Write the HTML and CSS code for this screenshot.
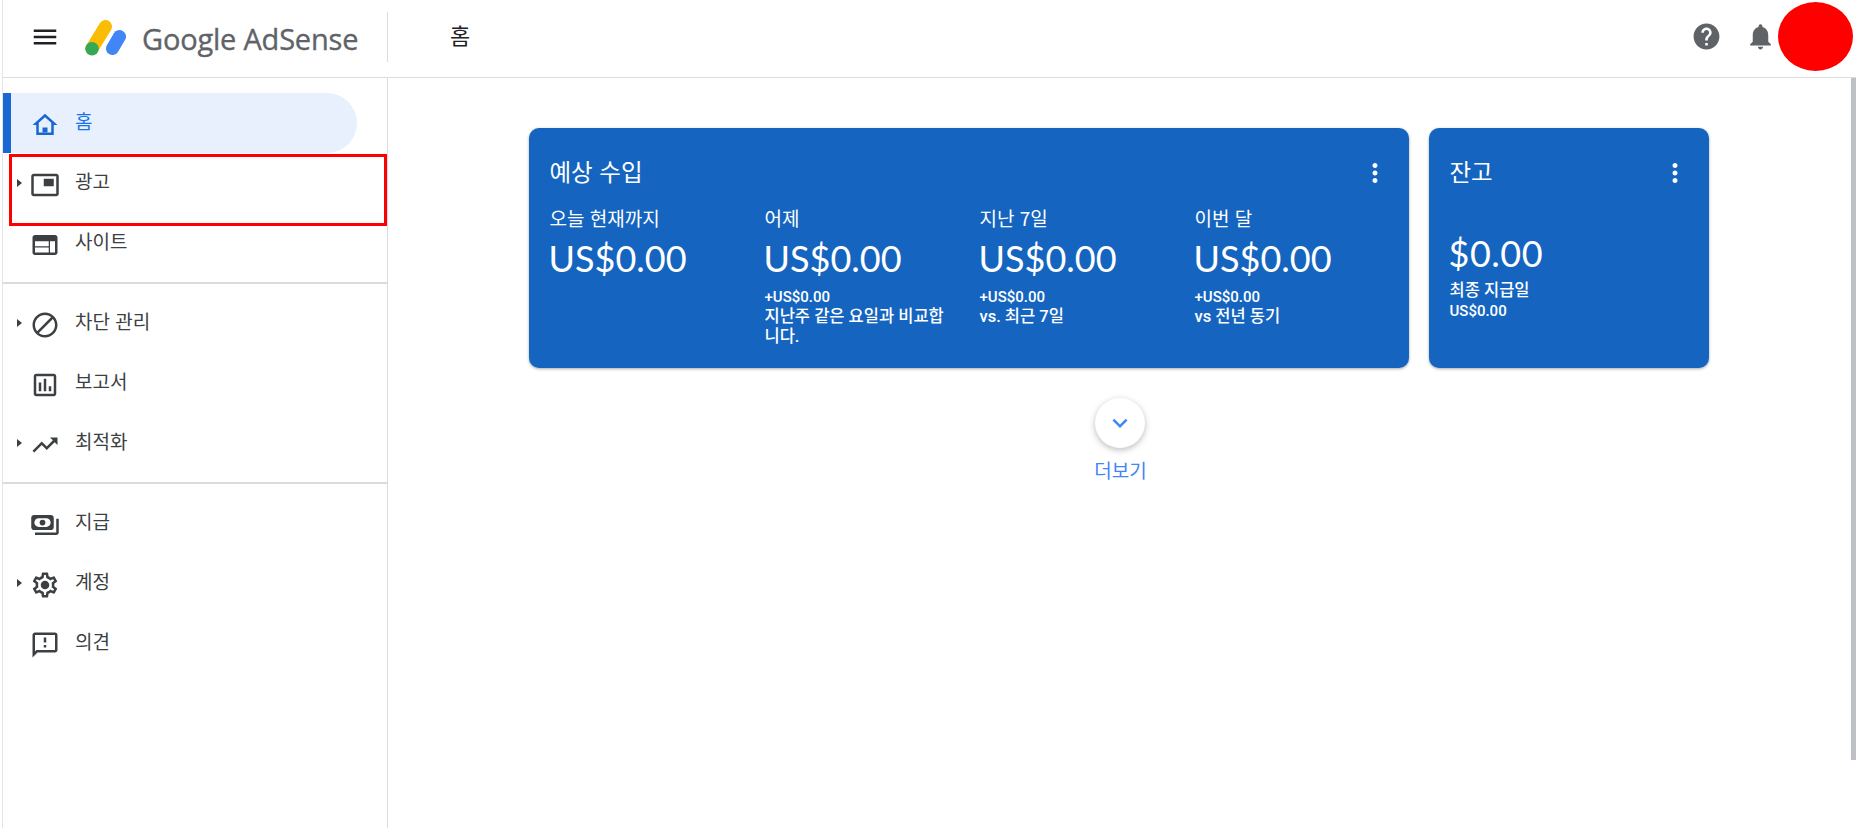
FILE: index.html
```html
<!DOCTYPE html>
<html lang="ko">
<head>
<meta charset="UTF-8">
<meta name="viewport" content="width=device-width, initial-scale=1.0">
<link rel="stylesheet" href="styles.css">
<title>Google AdSense</title>
</head>
<body>
<header class="topbar">
  <div class="brand">
    <svg class="menu-icon" viewBox="0 0 24 24"><path d="M3 18h18v-2H3v2zm0-5h18v-2H3v2zm0-7v2h18V6H3z"/></svg>
    <svg class="logo-mark" viewBox="0 0 41 36">
      <path d="M20.5 6.500L7 28.500" stroke="#fbbc04" stroke-width="13" stroke-linecap="round"/>
      <path d="M34.500 16.500L27.500 28.500" stroke="#4285f4" stroke-width="13" stroke-linecap="round"/>
      <circle cx="7" cy="28.700" r="6.800" fill="#34a853"/>
    </svg>
    <span class="logo-text">Google AdSense</span>
  </div>
  <h1 class="page-title">홈</h1>
  <div class="top-actions">
    <svg class="help-icon" viewBox="0 0 24 24"><path d="M12 2C6.48 2 2 6.48 2 12s4.48 10 10 10 10-4.48 10-10S17.52 2 12 2zm1 17h-2v-2h2v2zm2.07-7.75l-.9.92C13.45 12.9 13 13.5 13 15h-2v-.5c0-1.1.45-2.1 1.17-2.83l1.24-1.26c.37-.36.59-.86.59-1.41 0-1.1-.9-2-2-2s-2 .9-2 2H8c0-2.21 1.79-4 4-4s4 1.79 4 4c0 .88-.36 1.68-.93 2.25z"/></svg>
    <svg class="bell-icon" viewBox="0 0 24 24"><path d="M12 22c1.1 0 2-.9 2-2h-4c0 1.1.89 2 2 2zm6-6v-5c0-3.07-1.64-5.64-4.5-6.32V4c0-.83-.67-1.5-1.5-1.5s-1.5.67-1.5 1.5v.68C7.63 5.36 6 7.92 6 11v5l-2 2v1h16v-1l-2-2z"/></svg>
    <div class="avatar"></div>
  </div>
</header>

<div class="layout">
  <nav class="sidebar">
    <div class="nav-group">
      <a class="nav-item active">
        <span class="arrow-slot"></span>
        <svg class="nav-icon" viewBox="0 0 24 24"><path fill-rule="evenodd" d="M12 3L2 12h3v8h14v-8h3L12 3zm0 2.700l5 4.500V18H7v-7.800l5-4.500z"/><path d="M10 14h4v4h-4z"/></svg>
        <span class="nav-label">홈</span>
      </a>
      <a class="nav-item">
        <span class="arrow-slot"><i class="arrow"></i></span>
        <svg class="nav-icon" viewBox="0 0 24 24"><path d="M19 7h-8v6h8V7zm2-4H3c-1.1 0-2 .9-2 2v14c0 1.1.9 1.9 2 1.9h18c1.1 0 2-.8 2-1.9V5c0-1.1-.9-2-2-2zm0 16.01H3V4.98h18v14.03z"/></svg>
        <span class="nav-label">광고</span>
      </a>
      <a class="nav-item">
        <span class="arrow-slot"></span>
        <svg class="nav-icon" viewBox="0 0 24 24"><path d="M20 4H4c-1.1 0-2 .9-2 2v12c0 1.1.9 2 2 2h16c1.1 0 2-.9 2-2V6c0-1.1-.9-2-2-2zm-5 14H4v-4h11v4zm0-5H4V9h11v4zm5 5h-4V9h4v9z"/></svg>
        <span class="nav-label">사이트</span>
      </a>
    </div>
    <div class="nav-group">
      <a class="nav-item">
        <span class="arrow-slot"><i class="arrow"></i></span>
        <svg class="nav-icon" viewBox="0 0 24 24"><path d="M12 2C6.48 2 2 6.48 2 12s4.48 10 10 10 10-4.48 10-10S17.52 2 12 2zM4 12c0-4.42 3.58-8 8-8 1.85 0 3.55.63 4.9 1.69L5.69 16.9C4.63 15.55 4 13.85 4 12zm8 8c-1.85 0-3.55-.63-4.9-1.69L18.31 7.1C19.37 8.45 20 10.15 20 12c0 4.42-3.58 8-8 8z"/></svg>
        <span class="nav-label">차단 관리</span>
      </a>
      <a class="nav-item">
        <span class="arrow-slot"></span>
        <svg class="nav-icon" viewBox="0 0 24 24"><path d="M19 3H5c-1.1 0-2 .9-2 2v14c0 1.1.9 2 2 2h14c1.1 0 2-.9 2-2V5c0-1.1-.9-2-2-2zm0 16H5V5h14v14zM7 10h2v7H7zm4-3h2v10h-2zm4 6h2v4h-2z"/></svg>
        <span class="nav-label">보고서</span>
      </a>
      <a class="nav-item">
        <span class="arrow-slot"><i class="arrow"></i></span>
        <svg class="nav-icon" viewBox="0 0 24 24"><path d="M16 6l2.29 2.29-4.88 4.88-4-4L2 16.59 3.41 18l6-6 4 4 6.3-6.29L22 12V6z"/></svg>
        <span class="nav-label">최적화</span>
      </a>
    </div>
    <div class="nav-group">
      <a class="nav-item">
        <span class="arrow-slot"></span>
        <svg class="nav-icon" viewBox="0 0 24 24">
          <path d="M23 7v11c0 1.100-.9 2-2 2H4v-2h17V7h2z"/>
          <rect x="1" y="4" width="18" height="12" rx="2.500"/>
          <rect x="3.500" y="6.500" width="13" height="7" rx="3.500" fill="#ffffff"/>
          <circle cx="10" cy="10" r="2.300"/>
        </svg>
        <span class="nav-label">지급</span>
      </a>
      <a class="nav-item">
        <span class="arrow-slot"><i class="arrow"></i></span>
        <svg class="nav-icon" viewBox="0 0 24 24"><path d="M19.43 12.98c.04-.32.07-.64.07-.98s-.03-.66-.07-.98l2.11-1.65c.19-.15.24-.42.12-.64l-2-3.46c-.12-.22-.39-.3-.61-.22l-2.49 1c-.52-.4-1.08-.73-1.69-.98l-.38-2.65C14.46 2.18 14.25 2 14 2h-4c-.25 0-.46.18-.49.42l-.38 2.65c-.61.25-1.17.59-1.69.98l-2.49-1c-.23-.09-.49 0-.61.22l-2 3.46c-.13.22-.07.49.12.64l2.11 1.65c-.04.32-.07.65-.07.98s.03.66.07.98l-2.11 1.65c-.19.15-.24.42-.12.64l2 3.46c.12.22.39.3.61.22l2.49-1c.52.4 1.08.73 1.69.98l.38 2.65c.03.24.24.42.49.42h4c.25 0 .46-.18.49-.42l.38-2.65c.61-.25 1.17-.59 1.69-.98l2.49 1c.23.09.49 0 .61-.22l2-3.46c.12-.22.07-.49-.12-.64l-2.11-1.65zm-1.98-1.71c.04.31.05.52.05.73 0 .21-.02.43-.05.73l-.14 1.13.89.7 1.08.84-.7 1.21-1.27-.51-1.04-.42-.9.68c-.43.32-.84.56-1.25.73l-1.06.43-.16 1.13-.2 1.35h-1.4l-.19-1.35-.16-1.13-1.06-.43c-.43-.18-.83-.41-1.23-.71l-.91-.7-1.06.43-1.27.51-.7-1.21 1.08-.84.89-.7-.14-1.13c-.03-.31-.05-.54-.05-.74s.02-.43.05-.73l.14-1.13-.89-.7-1.08-.84.7-1.21 1.27.51 1.04.42.9-.68c.43-.32.84-.56 1.25-.73l1.06-.43.16-1.13.2-1.35h1.39l.19 1.35.16 1.13 1.06.43c.43.18.83.41 1.23.71l.91.7 1.06-.43 1.27-.51.7 1.21-1.07.85-.89.7.14 1.13z"/><circle cx="12" cy="12" r="3.400"/></svg>
        <span class="nav-label">계정</span>
      </a>
      <a class="nav-item">
        <span class="arrow-slot"></span>
        <svg class="nav-icon" viewBox="0 0 24 24"><path d="M20 2H4c-1.1 0-1.99.9-1.99 2L2 22l4-4h14c1.1 0 2-.9 2-2V4c0-1.1-.9-2-2-2zm0 14H5.17L4 17.17V4h16v12zm-9-4h2v2h-2zm0-6h2v4h-2z"/></svg>
        <span class="nav-label">의견</span>
      </a>
    </div>
    <div class="highlight-box"></div>
  </nav>

  <main class="content">
    <div class="cards">
      <section class="card card-wide">
        <div class="card-head">
          <h2>예상 수입</h2>
          <svg class="more-icon" viewBox="0 0 24 24"><path d="M12 8c1.1 0 2-.9 2-2s-.9-2-2-2-2 .9-2 2 .9 2 2 2zm0 2c-1.1 0-2 .9-2 2s.9 2 2 2 2-.9 2-2-.9-2-2-2zm0 6c-1.1 0-2 .9-2 2s.9 2 2 2 2-.9 2-2-.9-2-2-2z"/></svg>
        </div>
        <div class="stats">
          <div class="stat">
            <div class="stat-label">오늘 현재까지</div>
            <div class="stat-value">US$0.00</div>
          </div>
          <div class="stat">
            <div class="stat-label">어제</div>
            <div class="stat-value">US$0.00</div>
            <p class="note"><span class="note-amount">+US$0.00</span><span class="note-text">지난주 같은 요일과 비교합니다.</span></p>
          </div>
          <div class="stat">
            <div class="stat-label">지난 7일</div>
            <div class="stat-value">US$0.00</div>
            <p class="note"><span class="note-amount">+US$0.00</span><span class="note-text">vs. 최근 7일</span></p>
          </div>
          <div class="stat">
            <div class="stat-label">이번 달</div>
            <div class="stat-value">US$0.00</div>
            <p class="note"><span class="note-amount">+US$0.00</span><span class="note-text">vs 전년 동기</span></p>
          </div>
        </div>
      </section>
      <section class="card card-small">
        <div class="card-head">
          <h2>잔고</h2>
          <svg class="more-icon" viewBox="0 0 24 24"><path d="M12 8c1.1 0 2-.9 2-2s-.9-2-2-2-2 .9-2 2 .9 2 2 2zm0 2c-1.1 0-2 .9-2 2s.9 2 2 2 2-.9 2-2-.9-2-2-2zm0 6c-1.1 0-2 .9-2 2s.9 2 2 2 2-.9 2-2-.9-2-2-2z"/></svg>
        </div>
        <div class="balance-value">$0.00</div>
        <p class="note balance-note"><span class="note-text">최종 지급일</span><span class="note-amount">US$0.00</span></p>
      </section>
    </div>
    <div class="more">
      <button class="more-button">
        <svg viewBox="0 0 24 24"><path d="M7.41 8.59L12 13.17l4.59-4.58L18 10l-6 6-6-6z"/></svg>
      </button>
      <span class="more-label">더보기</span>
    </div>
  </main>
  <div class="scrollbar"></div>
</div>
</body>
</html>
```

FILE: styles.css
```css
* {
  box-sizing: border-box;
}

body {
  margin: 0 0 0 2px;
  height: 100vh;
  overflow: hidden;
  display: flex;
  flex-direction: column;
  background-color: #ffffff;
  border-left: 1px solid #e3e5e8;
  font-family: "Noto Sans CJK KR", "Noto Sans", sans-serif;
  color: #3c4043;
}

/* top bar */
.topbar {
  height: 78px;
  flex-shrink: 0;
  display: flex;
  align-items: center;
  border-bottom: 1px solid #dadce0;
  padding-bottom: 4px;
}

.brand {
  width: 385px;
  height: 50px;
  display: flex;
  align-items: center;
  border-right: 1px solid #dadce0;
  padding-left: 27px;
}

.menu-icon {
  width: 30px;
  height: 30px;
  fill: #202124;
  margin-right: 25px;
}

.logo-mark {
  width: 41px;
  height: 36px;
  margin-right: 16px;
  margin-top: 2px;
}

.logo-text {
  font-family: "Open Sans", sans-serif;
  font-size: 29px;
  color: #5f6368;
  letter-spacing: -0.2px;
  -webkit-text-stroke: 0.35px #5f6368;
  margin-top: 3px;
}

.page-title {
  margin: 0 0 5px 62px;
  font-size: 22px;
  font-weight: 400;
  color: #202124;
}

.top-actions {
  margin-left: auto;
  display: flex;
  align-items: center;
  margin-right: 3px;
}

.help-icon,
.bell-icon {
  width: 31px;
  height: 31px;
  fill: #5f6368;
}

.help-icon {
  margin-right: 23px;
}

.bell-icon {
  margin-right: 2px;
}

.avatar {
  width: 75px;
  height: 69px;
  border-radius: 50%;
  background-color: #ff0000;
}

/* sidebar */
.layout {
  flex: 1;
  display: flex;
  min-height: 0;
}

.sidebar {
  position: relative;
  width: 385px;
  flex-shrink: 0;
  border-right: 1px solid #dadce0;
  padding-top: 15px;
}

.nav-group {
  padding-bottom: 9px;
}

.nav-group + .nav-group {
  border-top: 2px solid #dadce0;
  padding-top: 9px;
}

.nav-item {
  height: 60px;
  width: 354px;
  display: flex;
  align-items: center;
  font-size: 19px;
  color: #3c4043;
}

.nav-item.active {
  background-color: #e8f0fe;
  border-left: 8px solid #1967d2;
  border-radius: 0 30px 30px 0;
  color: #1a73e8;
}

.arrow-slot {
  width: 27px;
  padding-left: 14px;
  display: flex;
}

.active .arrow-slot {
  width: 19px;
  padding-left: 6px;
}

.arrow {
  border-left: 5px solid #3c4043;
  border-top: 4px solid transparent;
  border-bottom: 4px solid transparent;
}

.nav-icon {
  width: 30px;
  height: 30px;
  fill: #3c4043;
  margin-top: 4px;
  margin-right: 15px;
}

.active .nav-icon {
  fill: #1967d2;
}

.nav-label {
  margin-bottom: 6px;
}

/* annotation over the nav */
.highlight-box {
  position: absolute;
  left: 6px;
  top: 76px;
  width: 378px;
  height: 72px;
  border: 3px solid #ff0000;
}

/* main content */
.content {
  flex: 1;
  padding: 50px 2px 0 0;
  display: flex;
  flex-direction: column;
  align-items: center;
}

.cards {
  display: flex;
  gap: 20px;
}

.card {
  height: 240px;
  background-color: #1565c0;
  border-radius: 10px;
  box-shadow: 0 1px 3px rgba(60, 64, 67, 0.45);
  color: #ffffff;
  padding: 28px 19px 0 21px;
}

.card-wide {
  width: 880px;
}

.card-small {
  width: 280px;
}

.card-head {
  display: flex;
  justify-content: space-between;
  align-items: center;
  height: 32px;
}

.card-head h2 {
  margin: 0 0 2px;
  font-size: 23.5px;
  font-weight: 400;
}

.more-icon {
  width: 30px;
  height: 30px;
  fill: #ffffff;
  margin-top: 2px;
}

.stats {
  display: grid;
  grid-template-columns: repeat(4, 215px);
  margin-top: 18px;
}

.stat {
  width: 190px;
}

.stat-label {
  font-size: 19px;
  line-height: 24px;
}

.stat-value {
  font-family: "Lato", sans-serif;
  font-size: 36px;
  line-height: 48px;
  margin: 4px 0 0 -1px;
}

.note {
  margin: 5px 0 0;
  font-family: "Roboto", "Noto Sans CJK KR", sans-serif;
}

.note-amount {
  display: block;
  font-size: 15px;
  font-weight: 500;
  line-height: 20px;
}

.note-text {
  display: block;
  font-size: 16.5px;
  font-weight: 500;
  line-height: 20px;
}

.balance-value {
  font-family: "Lato", sans-serif;
  font-size: 36px;
  line-height: 48px;
  letter-spacing: 0.5px;
  margin: 41px 0 0 -1px;
}

.balance-note {
  margin-top: 3px;
}

.balance-note .note-text {
  line-height: 21px;
}

.more {
  margin: 30px 0 0 4px;
  display: flex;
  flex-direction: column;
  align-items: center;
}

.more-button {
  width: 50px;
  height: 50px;
  padding: 10px;
  border: none;
  border-radius: 50%;
  background-color: #ffffff;
  box-shadow: 0 2px 6px rgba(60, 64, 67, 0.35);
}

.more-button svg {
  display: block;
  width: 30px;
  height: 30px;
  fill: #4285f4;
}

.more-label {
  margin-top: 8px;
  font-size: 19px;
  color: #4285f4;
}

.scrollbar {
  width: 5px;
  height: 682px;
  background-color: #bdc1c6;
}
```
